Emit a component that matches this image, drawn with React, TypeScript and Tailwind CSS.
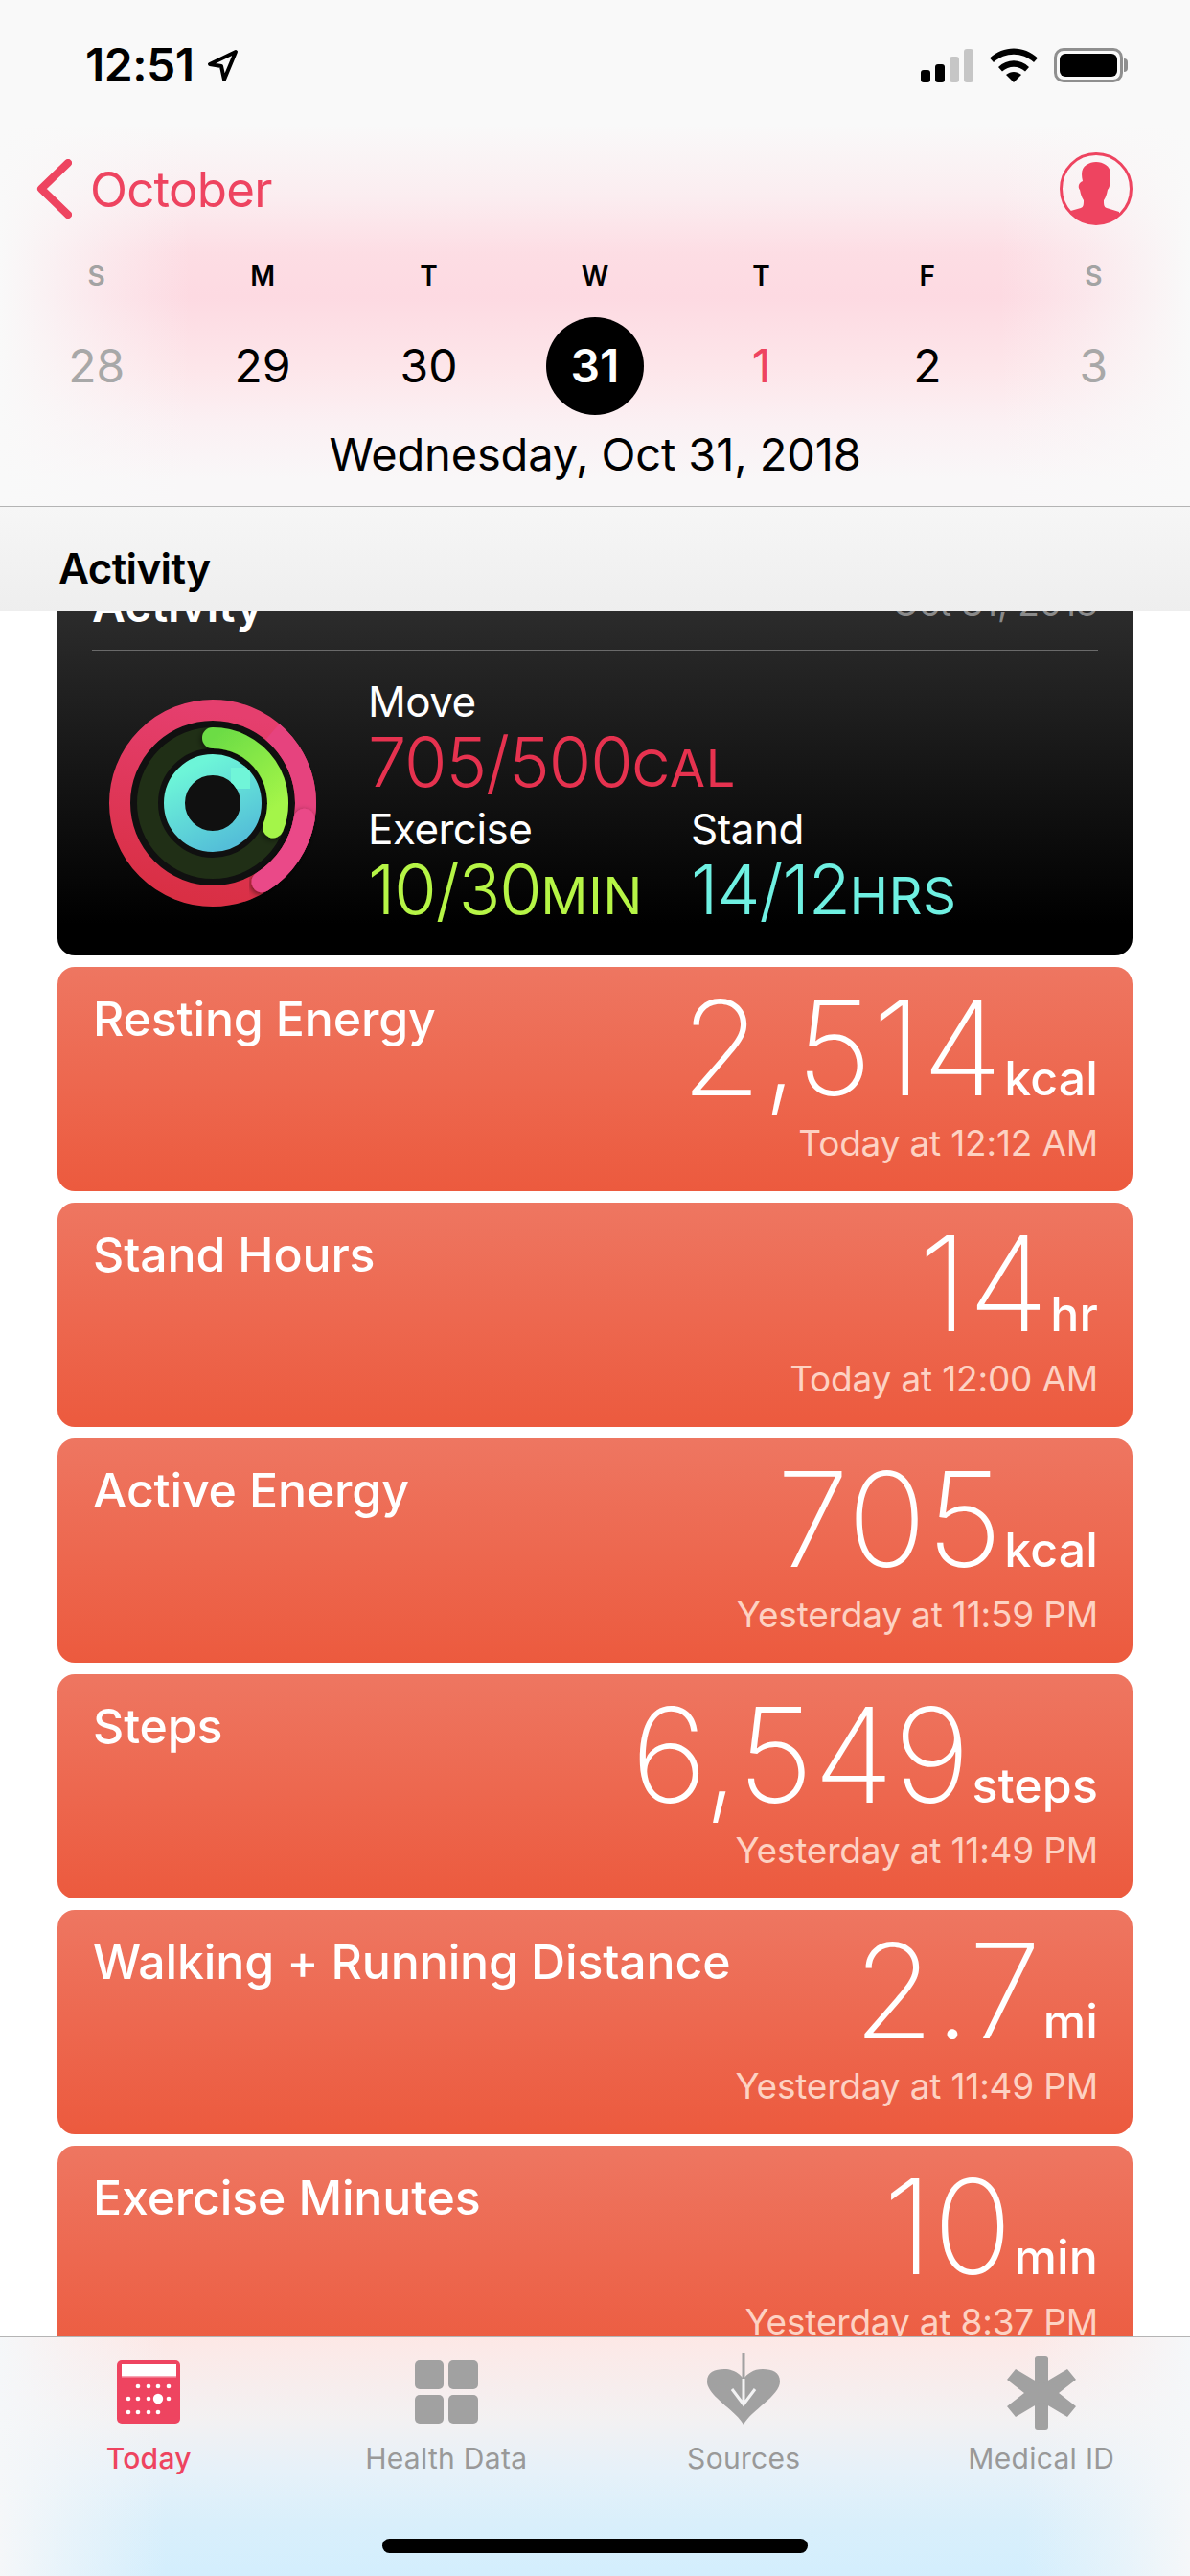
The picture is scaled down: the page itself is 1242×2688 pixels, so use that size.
import React from "react";

const FONT = "font-['Inter','Liberation_Sans',sans-serif]";

const cards = [
  { t: "Resting Energy", n: "2,514", u: "kcal", w: "Today at 12:12 AM" },
  { t: "Stand Hours", n: "14", u: "hr", w: "Today at 12:00 AM" },
  { t: "Active Energy", n: "705", u: "kcal", w: "Yesterday at 11:59 PM" },
  { t: "Steps", n: "6,549", u: "steps", w: "Yesterday at 11:49 PM" },
  { t: "Walking + Running Distance", n: "2.7", u: "mi", w: "Yesterday at 11:49 PM" },
  { t: "Exercise Minutes", n: "10", u: "min", w: "Yesterday at 8:37 PM" },
];

const days = [
  { l: "S", d: "28", lc: "text-[#a3a3a3]", dc: "text-[#a8a8a8]" },
  { l: "M", d: "29", lc: "text-black", dc: "text-black" },
  { l: "T", d: "30", lc: "text-black", dc: "text-black" },
  { l: "W", d: "31", lc: "text-black", dc: "text-white font-semibold", sel: true },
  { l: "T", d: "1", lc: "text-black", dc: "text-[#ee4460]" },
  { l: "F", d: "2", lc: "text-black", dc: "text-black" },
  { l: "S", d: "3", lc: "text-[#a3a3a3]", dc: "text-[#a8a8a8]" },
];

const dotRows = [
  { y: 27, xs: [22, 33, 43, 54] },
  { y: 40, xs: [12, 22, 33, 54] },
  { y: 54, xs: [12, 22, 33, 43] },
];

function pt(r: number, deg: number) {
  const a = ((deg - 90) * Math.PI) / 180;
  return `${(120 + r * Math.cos(a)).toFixed(2)} ${(120 + r * Math.sin(a)).toFixed(2)}`;
}
function arc(r: number, from: number, to: number) {
  const large = to - from > 180 ? 1 : 0;
  return `M${pt(r, from)} A${r} ${r} 0 ${large} 1 ${pt(r, to)}`;
}

function Rings() {
  return (
    <svg width="240" height="240" viewBox="0 0 240 240" className="shrink-0">
      <defs>
        <linearGradient id="mv" x1="0.3" y1="1" x2="0.5" y2="0">
          <stop offset="0" stopColor="#d92f44" />
          <stop offset="1" stopColor="#e53f6e" />
        </linearGradient>
        <linearGradient id="ex" x1="0" y1="0" x2="0.6" y2="1">
          <stop offset="0" stopColor="#6cdc45" />
          <stop offset="1" stopColor="#a4f548" />
        </linearGradient>
        <linearGradient id="st" x1="0.3" y1="0" x2="0.8" y2="1">
          <stop offset="0" stopColor="#6df5d8" />
          <stop offset="1" stopColor="#54bfd8" />
        </linearGradient>
        <filter id="sh" x="-30%" y="-30%" width="160%" height="160%">
          <feDropShadow dx="-1" dy="2" stdDeviation="3" floodColor="#000" floodOpacity="0.55" />
        </filter>
      </defs>
      <circle cx="120" cy="120" r="108" fill="#101010" />
      <circle cx="120" cy="120" r="97" fill="none" stroke="url(#mv)" strokeWidth="22" />
      <path d={arc(97, 40, 148)} fill="none" stroke="#e6437e" strokeWidth="22" />
      <path d={arc(97, 100, 148)} fill="none" stroke="#ea4888" strokeWidth="22" strokeLinecap="round" filter="url(#sh)" />
      <circle cx="120" cy="120" r="68" fill="none" stroke="#202f16" strokeWidth="22" />
      <path d={arc(68, 0, 112)} fill="none" stroke="url(#ex)" strokeWidth="22" strokeLinecap="round" filter="url(#sh)" />
      <circle cx="120" cy="120" r="40" fill="none" stroke="url(#st)" strokeWidth="22" />
      <path d={arc(40, 35, 61)} fill="none" stroke="#6ff5d8" strokeWidth="22" strokeLinecap="round" filter="url(#sh)" />
    </svg>
  );
}

function Stat({ label, value, unit, color, className }: { label: string; value: string; unit: string; color: string; className?: string }) {
  return (
    <div className={className}>
      <div className="text-[44px] leading-[54px] text-white tracking-[-0.012em]">{label}</div>
      <div className={`flex items-baseline leading-[72px] ${color}`}>
        <span className="text-[72px] font-light tracking-[-0.015em]">{value}</span>
        <span className="text-[54px] font-normal tracking-[0.015em]">{unit}</span>
      </div>
    </div>
  );
}

export default function App() {
  return (
    <div className={`${FONT} flex h-[2688px] w-[1242px] flex-col overflow-hidden bg-white`}>
      {/* Header */}
      <header className="h-[529px] shrink-0 border-b border-[#b4b4b4] bg-[#f9f9f9] bg-[linear-gradient(90deg,#f9f9f9,#f9f9f9bb_4%,#f9f9f966_9%,#f9f9f900_16%,#f9f9f900_84%,#f9f9f966_91%,#f9f9f9bb_96%,#f9f9f9),linear-gradient(180deg,#f9f9f9_130px,#fbedf0_205px,#fddde4_265px,#fddae2_310px,#fde6ea_385px,#fbf0f3_440px,#f9f7f8_500px)]">
        <div className="flex h-[136px] items-center justify-between pl-[89px] pr-[65px]">
          <div className="flex items-center gap-[13px]">
            <span className="text-[48px] font-semibold tracking-[-0.01em] text-black">12:51</span>
            <svg width="33" height="35" viewBox="0 0 33 35">
              <path d="M30 3 3 16l12 2 3 14z" fill="none" stroke="#000" strokeWidth="4" strokeLinejoin="round" />
            </svg>
          </div>
          <div className="flex items-center gap-[17px]">
            <div className="flex items-end gap-[5px]">
              <div className="h-[13px] w-[10px] rounded-[3px] bg-black" />
              <div className="h-[19px] w-[10px] rounded-[3px] bg-black" />
              <div className="h-[27px] w-[10px] rounded-[3px] bg-[#c6c6c6]" />
              <div className="h-[35px] w-[10px] rounded-[3px] bg-[#c6c6c6]" />
            </div>
            <svg width="50" height="36" viewBox="0 0 50 36">
              <path d="M0 10.5C14-3 36-3 50 10.5l-4 4.5C34 4 16 4 4 15z" fill="#000" />
              <path d="M9 20C18 11 32 11 41 20l-4 4.5C30 18 20 18 13 24.500z" fill="#000" />
              <path d="M17 28c5-4 11-4 16 0l-8 8z" fill="#000" />
            </svg>
            <div className="flex items-center gap-[1px]">
              <div className="h-[36px] w-[72px] rounded-[10px] border-[3px] border-[#8f8f8f] p-[3px]">
                <div className="h-full w-full rounded-[6px] bg-black" />
              </div>
              <div className="h-[14px] w-[4px] rounded-r-[4px] bg-[#8f8f8f]" />
            </div>
          </div>
        </div>

        <div className="flex h-[122px] items-center justify-between pl-[38px] pr-[60px]">
          <div className="flex items-center gap-[19px]">
            <svg width="37" height="62" viewBox="0 0 37 62">
              <path d="M33 4 5 31l28 27" fill="none" stroke="#ee4460" strokeWidth="8" strokeLinecap="round" strokeLinejoin="round" />
            </svg>
            <span className="translate-y-[1px] text-[51px] tracking-[-0.015em] text-[#ee4460]">October</span>
          </div>
          <svg width="76" height="76" viewBox="0 0 76 76">
            <defs>
              <clipPath id="pc"><circle cx="38" cy="38" r="36" /></clipPath>
            </defs>
            <circle cx="38" cy="38" r="36.500" fill="none" stroke="#ee4460" strokeWidth="3" />
            <path
              clipPath="url(#pc)"
              d="M24 30C22 22 23 16 28 13c3-2 6-3 10-3s7 1 10 3c5 3 6 9 4 17 1 2 0 7-2 9-1 5-2 8-4 11 0 4 0 7 3 8l13 4v18H8V62l14-4c3-1 3-4 3-8-2-3-3-6-4-11-2-2-2-7 3-9z"
              fill="#ee4460"
            />
          </svg>
        </div>

        <div className="grid h-[60px] grid-cols-7 items-center px-[14px]">
          {days.map((d, i) => (
            <div key={i} className={`text-center text-[28px] font-semibold ${d.lc}`}>{d.l}</div>
          ))}
        </div>

        <div className="grid h-[130px] grid-cols-7 items-center px-[14px] pt-[4px] pb-[6px]">
          {days.map((d, i) => (
            <div key={i} className="flex justify-center">
              <div className={`flex h-[102px] w-[102px] items-center justify-center rounded-full text-[48px] ${d.sel ? "bg-black" : ""} ${d.dc}`}>
                {d.d}
              </div>
            </div>
          ))}
        </div>

        <div className="-mt-[12px] text-center text-[47px] leading-[76px] tracking-[-0.003em] text-black">Wednesday, Oct 31, 2018</div>
      </header>

      {/* Sticky section header */}
      <div className="flex h-[109px] shrink-0 items-center bg-[#f5f5f5] bg-[linear-gradient(180deg,#f6f6f6,#eeeeee)] pl-[61px] pt-[18px]">
        <span className="text-[44px] font-semibold tracking-[-0.015em] text-black">Activity</span>
      </div>

      {/* Scrolling list */}
      <main className="min-h-0 flex-1 overflow-hidden px-[60px]">
        <section className="-mt-[48px] h-[407px] rounded-[18px] bg-[linear-gradient(180deg,#323232,#000_92%)] px-[36px]">
          <div className="flex h-[89px] items-end justify-between border-b border-[#6a6a6a] pb-[18px]">
            <span className="text-[48px] font-semibold leading-[56px] text-white">Activity</span>
            <span className="text-[37px] leading-[60px] text-[#8a8a8a]">Oct 31, 2018</span>
          </div>
          <div className="flex items-start pt-[30px]">
            <div className="ml-[6px] mt-[9px] mr-[42px]"><Rings /></div>
            <div className="-mt-[4px]">
              <Stat label="Move" value="705/500" unit="CAL" color="text-[#e6324f]" />
              <div className="flex gap-[50px]">
                <Stat label="Exercise" value="10/30" unit="MIN" color="text-[#b6f546]" />
                <Stat label="Stand" value="14/12" unit="HRS" color="text-[#6ff0e2]" />
              </div>
            </div>
          </div>
        </section>

        <div className="mt-[12px] flex flex-col gap-[12px]">
          {cards.map((c) => (
            <article
              key={c.t}
              className="flex h-[234px] shrink-0 items-start justify-between rounded-[18px] bg-[linear-gradient(180deg,#ee7661,#ec5a3e)] pl-[37px] pr-[36px] pt-[24px] text-white"
            >
              <h2 className="text-[50px] font-medium leading-[60px] tracking-[-0.003em]">{c.t}</h2>
              <div className="flex flex-col items-end">
                <div className="-mt-[6px] flex h-[132px] items-baseline">
                  <span className="mr-[2px] text-[137px] font-extralight leading-[132px]">{c.n}</span>
                  <span className="text-[50px] font-medium leading-[132px] tracking-[0.003em]">{c.u}</span>
                </div>
                <div className="mt-[12px] text-[37px] leading-[44px] tracking-[-0.005em] text-[#fdd2c3]">{c.w}</div>
              </div>
            </article>
          ))}
        </div>
      </main>

      {/* Tab bar */}
      <nav className="relative grid h-[250px] shrink-0 grid-cols-4 border-t border-[#b4b4b4] bg-[#f6f6f6] bg-[linear-gradient(90deg,#f5f7f9,#f5f7f988_6%,#f5f7f900_14%,#f5f7f900_86%,#f5f7f988_94%,#f5f7f9),linear-gradient(180deg,#fde8e6,#f3f1f2_34%,#e6f1f9_56%,#d9effb_78%,#d3eefd)] pt-[16px]">
        <Tab label="Today" active>
          <svg width="66" height="66" viewBox="0 0 66 66">
            <rect width="66" height="66" rx="5" fill="#ee4460" />
            <rect x="5" y="4" width="57" height="12" fill="#fff" />
            <rect x="5" y="16" width="57" height="1.500" fill="#f7a6b4" />
            {dotRows.map((r) =>
              r.xs.map((x) => <circle key={`${r.y}-${x}`} cx={x} cy={r.y} r="2.300" fill="#fff" />)
            )}
            <circle cx="43" cy="40" r="5.200" fill="#fff" />
          </svg>
        </Tab>
        <Tab label="Health Data">
          <div className="grid h-[66px] w-[66px] grid-cols-2 gap-x-[5px] gap-y-[6px]">
            <div className="rounded-[5px] bg-[#a1a1a1]" />
            <div className="rounded-[5px] bg-[#a1a1a1]" />
            <div className="rounded-[5px] bg-[#a1a1a1]" />
            <div className="rounded-[5px] bg-[#a1a1a1]" />
          </div>
        </Tab>
        <Tab label="Sources">
          <svg width="76" height="76" viewBox="0 0 76 76" className="-mt-[8px]">
            <path d="M38 75C30 60 0 45 0 30 0 20 8 17 18 17c10 0 16 5 20 10 4-5 10-10 20-10 10 0 18 3 18 13 0 15-30 30-38 45z" fill="#a1a1a1" />
            <path d="M38 0v27" stroke="#a1a1a1" strokeWidth="3" fill="none" />
            <path d="M38 27v26M26 38l12 16 12-16" stroke="#f3f3f4" strokeWidth="3" fill="none" />
          </svg>
        </Tab>
        <Tab label="Medical ID">
          <svg width="72" height="78" viewBox="0 0 72 78" className="-mt-[5px]">
            <rect x="29" y="0" width="14" height="78" rx="3" fill="#a1a1a1" />
            <path d="M9 14 36 30 63 14 72 25 54 39 72 53 63 64 36 48 9 64 0 53 18 39 0 25z" fill="#a1a1a1" />
          </svg>
        </Tab>
        <div className="absolute bottom-[24px] left-[399px] h-[15px] w-[444px] rounded-full bg-black" />
      </nav>
    </div>
  );
}

function Tab({ label, active, children }: { label: string; active?: boolean; children: React.ReactNode }) {
  return (
    <div className="flex flex-col items-center">
      <div className="mt-[8px] flex h-[66px] items-start justify-center">{children}</div>
      <span className={`mt-[18px] text-[30px] leading-[36px] tracking-[0.01em] ${active ? "font-medium text-[#ee4460]" : "text-[#999999]"}`}>{label}</span>
    </div>
  );
}
